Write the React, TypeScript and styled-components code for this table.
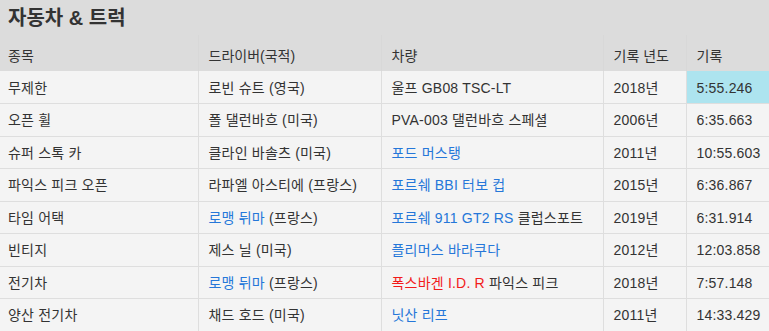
import styled, { createGlobalStyle } from "styled-components";

const GlobalStyle = createGlobalStyle`
  html, body {
    margin: 0;
    padding: 0;
    background: #f4f4f4;
    overflow: hidden;
  }
  body {
    font-family: "Liberation Sans", "Noto Sans CJK KR", sans-serif;
    color: #333;
  }
`;

const Wrapper = styled.div`
  width: 769px;
  background: #f4f4f4;
`;

const Title = styled.h2`
  margin: 0;
  padding: 4px 8px 0;
  height: 35px;
  box-sizing: border-box;
  background: #dcdcdc;
  font-size: 20px;
  line-height: 28px;
  font-weight: bold;
  color: #333;
`;

const Table = styled.table`
  border-collapse: collapse;
  table-layout: fixed;
  width: 780px;
  font-size: 14px;
`;

const HeadCell = styled.th`
  background: #dcdcdc;
  text-align: left;
  font-weight: normal;
  height: 36px;
  padding: 6px 10px 0;
  box-sizing: border-box;
  border-left: 1px solid #d8d8d8;
  line-height: 18px;
  &:first-child {
    padding-left: 8px;
    border-left: none;
  }
`;

const Cell = styled.td<{ $hl?: boolean }>`
  background: ${(p) => (p.$hl ? "#ade4ef" : "#f4f4f4")};
  border: 1px solid #dedede;
  border-top: none;
  height: 32.5px;
  padding: 1px 10px 0;
  box-sizing: border-box;
  line-height: 18px;
  letter-spacing: 0.2px;
  white-space: nowrap;
  &:first-child {
    padding-left: 8px;
    border-left: none;
  }
`;

const Link = styled.span<{ $red?: boolean }>`
  color: ${(p) => (p.$red ? "#f21b1b" : "#2577d9")};
`;

type Row = {
  cat: string;
  driver: React.ReactNode;
  car: React.ReactNode;
  year: string;
  time: string;
  hl?: boolean;
};

const rows: Row[] = [
  { cat: "무제한", driver: "로빈 슈트 (영국)", car: "울프 GB08 TSC-LT", year: "2018년", time: "5:55.246", hl: true },
  { cat: "오픈 휠", driver: "폴 댈런바흐 (미국)", car: "PVA-003 댈런바흐 스페셜", year: "2006년", time: "6:35.663" },
  { cat: "슈퍼 스톡 카", driver: "클라인 바솔츠 (미국)", car: <Link>포드 머스탱</Link>, year: "2011년", time: "10:55.603" },
  { cat: "파익스 피크 오픈", driver: "라파엘 아스티에 (프랑스)", car: <Link>포르쉐 BBI 터보 컵</Link>, year: "2015년", time: "6:36.867" },
  {
    cat: "타임 어택",
    driver: <><Link>로맹 뒤마</Link> (프랑스)</>,
    car: <><Link>포르쉐 911 GT2 RS</Link> 클럽스포트</>,
    year: "2019년",
    time: "6:31.914",
  },
  { cat: "빈티지", driver: "제스 닐 (미국)", car: <Link>플리머스 바라쿠다</Link>, year: "2012년", time: "12:03.858" },
  {
    cat: "전기차",
    driver: <><Link>로맹 뒤마</Link> (프랑스)</>,
    car: <><Link $red>폭스바겐 I.D. R</Link> 파익스 피크</>,
    year: "2018년",
    time: "7:57.148",
  },
  { cat: "양산 전기차", driver: "채드 호드 (미국)", car: <Link>닛산 리프</Link>, year: "2011년", time: "14:33.429" },
];

export default function App() {
  return (
    <Wrapper>
      <GlobalStyle />
      <Title>자동차 &amp; 트럭</Title>
      <Table>
        <colgroup>
          <col style={{ width: 198 }} />
          <col style={{ width: 183 }} />
          <col style={{ width: 222 }} />
          <col style={{ width: 83 }} />
          <col style={{ width: 94 }} />
        </colgroup>
        <thead>
          <tr>
            <HeadCell>종목</HeadCell>
            <HeadCell>드라이버(국적)</HeadCell>
            <HeadCell>차량</HeadCell>
            <HeadCell>기록 년도</HeadCell>
            <HeadCell>기록</HeadCell>
          </tr>
        </thead>
        <tbody>
          {rows.map((r) => (
            <tr key={r.cat}>
              <Cell>{r.cat}</Cell>
              <Cell>{r.driver}</Cell>
              <Cell>{r.car}</Cell>
              <Cell>{r.year}</Cell>
              <Cell $hl={r.hl}>{r.time}</Cell>
            </tr>
          ))}
        </tbody>
      </Table>
    </Wrapper>
  );
}
